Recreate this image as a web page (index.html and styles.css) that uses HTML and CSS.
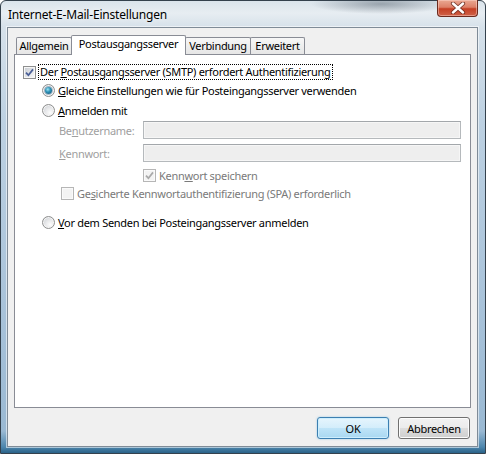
FILE: index.html
```html
<!DOCTYPE html>
<html lang="de">
<head>
<meta charset="utf-8">
<title>Internet-E-Mail-Einstellungen</title>
<link rel="stylesheet" href="styles.css">
</head>
<body>
<div class="window">
  <div class="titlebar">
    <span class="title">Internet-E-Mail-Einstellungen</span>
    <div class="close">
      <svg width="16" height="12" viewBox="0 0 16 12">
        <path d="M3 1.5 L13 10.5 M13 1.5 L3 10.5" stroke="#5a2318" stroke-width="4.2" stroke-linecap="round" fill="none" opacity="0.75"/>
        <path d="M3 1.5 L13 10.5 M13 1.5 L3 10.5" stroke="#ffffff" stroke-width="2.4" stroke-linecap="round" fill="none"/>
      </svg>
    </div>
  </div>
  <div class="client">
    <div class="tabs">
      <div class="tab tab-general">Allgemein</div>
      <div class="tab tab-outgoing active">Postausgangsserver</div>
      <div class="tab tab-connection">Verbindung</div>
      <div class="tab tab-advanced">Erweitert</div>
    </div>
    <div class="panel">
      <div class="row row-auth">
        <span class="check checked"><svg width="9" height="9" viewBox="0 0 9 9"><path d="M1 4.6 L3.4 7.2 L8 1.4" stroke="#4a5f97" stroke-width="1.7" fill="none"/></svg></span>
        <span class="label focus">Der <u>P</u>ostausgangsserver (SMTP) erfordert Authentifizierung</span>
      </div>
      <div class="row row-same indent1">
        <span class="radio on"><span class="dot"></span></span>
        <span class="label"><u>G</u>leiche Einstellungen wie für Posteingangsserver verwenden</span>
      </div>
      <div class="row row-login indent1">
        <span class="radio"></span>
        <span class="label"><u>A</u>nmelden mit</span>
      </div>
      <div class="row row-user indent2">
        <span class="field-label disabled">Be<u>n</u>utzername:</span>
        <span class="input"></span>
      </div>
      <div class="row row-pass indent2">
        <span class="field-label disabled"><u>K</u>ennwort:</span>
        <span class="input"></span>
      </div>
      <div class="row row-save indent3">
        <span class="check checked off"><svg width="9" height="9" viewBox="0 0 9 9"><path d="M1 4.6 L3.4 7.2 L8 1.4" stroke="#a9a9a9" stroke-width="1.7" fill="none"/></svg></span>
        <span class="label disabled-dark">Kenn<u>w</u>ort speichern</span>
      </div>
      <div class="row row-spa indent2b">
        <span class="check off"></span>
        <span class="label disabled-dark">Ge<u>s</u>icherte Kennwortauthentifizierung (SPA) erforderlich</span>
      </div>
      <div class="row row-before indent1">
        <span class="radio"></span>
        <span class="label"><u>V</u>or dem Senden bei Posteingangsserver anmelden</span>
      </div>
    </div>
    <div class="buttons">
      <button class="btn default">OK</button>
      <button class="btn">Abbrechen</button>
    </div>
  </div>
</div>
</body>
</html>
```

FILE: styles.css
```css
html, body {
  margin: 0;
  padding: 0;
  background: #ffffff;
}

body {
  font-family: "Noto Sans", "Open Sans", sans-serif;
  font-size: 11px;
  letter-spacing: -0.3px;
  color: #000;
}

.window {
  width: 486px;
  height: 454px;
  box-sizing: border-box;
  border: 1px solid #34414d;
  border-radius: 6px 6px 0 0;
  padding: 0 7px 6px 6px;
  display: flex;
  flex-direction: column;
  background:
    radial-gradient(ellipse 70px 10px at 380px 3px, rgba(70, 82, 94, 0.45), rgba(70, 82, 94, 0) 100%),
    linear-gradient(to bottom, #dae4ec 0, #e7edf2 12px, #d6e1ea 26px, #bdd1e2 120px, #a9c3da 300px, #9ab9d3 430px, #4d86ad 446px, #2a6288 452px);
}

.titlebar {
  height: 26px;
  display: flex;
  justify-content: space-between;
  align-items: flex-start;
  flex: none;
}

.title {
  font-family: "Noto Sans", "Open Sans", sans-serif;
  font-size: 12px;
  letter-spacing: -0.2px;
  padding: 5px 0 0 1px;
  color: #000;
  text-shadow: 0 0 6px rgba(255, 255, 255, 0.9);
}

.close {
  width: 41px;
  height: 17px;
  margin-top: -1px;
  box-sizing: border-box;
  border: 1px solid #6b2a1e;
  border-top: none;
  border-radius: 0 0 4px 4px;
  background: linear-gradient(to bottom, #eaa892 0, #dd8068 45%, #c53f24 55%, #cf6248 100%);
  box-shadow: inset 0 0 0 1px rgba(255, 220, 210, 0.45);
  display: flex;
  align-items: center;
  justify-content: center;
}

.client {
  flex: 1;
  box-sizing: border-box;
  background: #f0f0f0;
  border: 1px solid #7f8b97;
  box-shadow: 0 0 0 1px rgba(255, 255, 255, 0.55);
  padding: 7px 6px 7px 6px;
  display: flex;
  flex-direction: column;
}

.tabs {
  display: flex;
  align-items: flex-end;
  height: 20px;
  margin-left: 2px;
  margin-bottom: -1px;
  position: relative;
  z-index: 1;
  flex: none;
}

.tab {
  box-sizing: border-box;
  height: 17px;
  margin-bottom: 1px;
  margin-right: -1px;
  border: 1px solid #898c95;
  border-bottom: none;
  border-radius: 2px 2px 0 0;
  background: linear-gradient(to bottom, #f7f7f7 0, #eeeeee 50%, #e6e6e6 100%);
  display: flex;
  align-items: center;
  justify-content: center;
  line-height: 1;
  padding-bottom: 1px;
}

.tab.active {
  height: 20px;
  margin-bottom: 0;
  background: #ffffff;
  padding-bottom: 4px;
}

.tab-general { width: 56px; }
.tab-outgoing { width: 115px; }
.tab-connection { width: 66px; }
.tab-advanced { width: 55px; }

.panel {
  height: 354px;
  box-sizing: border-box;
  flex: none;
  background: #ffffff;
  border: 1px solid #898c95;
  padding: 8px 9px 0 8px;
  display: flex;
  flex-direction: column;
}

.row {
  height: 18px;
  display: flex;
  align-items: center;
  flex: none;
}

.row-same { margin-top: 0; }
.row-login { margin-top: 2px; }
.row-user { margin-top: 2px; }
.row-pass { margin-top: 5px; }
.row-save { margin-top: 4px; }
.row-spa { margin-top: 0; }
.row-before { margin-top: 11px; }

.indent1 { padding-left: 19px; }
.indent2 { padding-left: 36px; }
.indent2b { padding-left: 38px; }
.indent3 { padding-left: 120px; }

.label {
  margin-left: 3px;
  white-space: nowrap;
}

.focus {
  margin-left: 2px;
  padding: 0 1px;
  border: 1px dotted #000;
  line-height: 14px;
}

.field-label {
  width: 84px;
  flex: none;
  white-space: nowrap;
}

.disabled {
  color: #a0a0a0;
}

.disabled-dark {
  color: #7a7a7a;
}

.input {
  flex: 1;
  height: 18px;
  box-sizing: border-box;
  background: #eeeeee;
  border: 1px solid #b5b9bc;
  border-top-color: #a3a7ab;
  box-shadow: inset 0 0 0 1px #f6f6f6;
}

.check {
  width: 13px;
  height: 13px;
  box-sizing: border-box;
  flex: none;
  border: 1px solid #8e8f8f;
  background:
    linear-gradient(135deg, #c6cbd1 0, #e3e5e8 55%, #fbfbfb 100%);
  box-shadow: inset 0 0 0 1px #f7f7f7;
  display: flex;
  align-items: center;
  justify-content: center;
}

.check.off {
  border-color: #b6b6b6;
  background: #f3f3f3;
  box-shadow: inset 0 0 0 1px #fafafa;
}

.radio {
  width: 13px;
  height: 13px;
  box-sizing: border-box;
  flex: none;
  border-radius: 50%;
  border: 1px solid #8e8f8f;
  background: radial-gradient(circle at 65% 70%, #fdfdfd 0, #e6e7e9 45%, #c3c7cc 100%);
  box-shadow: inset 0 0 0 1px #f5f5f5;
  display: flex;
  align-items: center;
  justify-content: center;
}

.dot {
  width: 7px;
  height: 7px;
  border-radius: 50%;
  background: radial-gradient(circle at 40% 35%, #9fe6f5 0, #2f94b8 40%, #114d72 100%);
  box-shadow: 0 0 0 1px rgba(40, 90, 130, 0.35);
}

.buttons {
  display: flex;
  justify-content: flex-end;
  gap: 9px;
  margin-top: 9px;
  margin-right: 1px;
  flex: none;
}

.btn {
  width: 72px;
  height: 22px;
  box-sizing: border-box;
  font-family: "Noto Sans", "Open Sans", sans-serif;
  font-size: 11px;
  letter-spacing: -0.3px;
  color: #000;
  border: 1px solid #707070;
  border-radius: 3px;
  background: linear-gradient(to bottom, #f2f2f2 0, #ebebeb 50%, #dddddd 50%, #cfcfcf 100%);
  box-shadow: inset 0 0 0 1px #fcfcfc;
  padding: 0;
}

.btn.default {
  border-color: #3c7fb1;
  background: linear-gradient(to bottom, #e6f5fd 0, #d3edfb 50%, #bfe4f8 50%, #a9d8f1 100%);
  box-shadow: inset 0 0 0 1px #cdeefd, 0 0 2px rgba(80, 170, 220, 0.6);
}
```
